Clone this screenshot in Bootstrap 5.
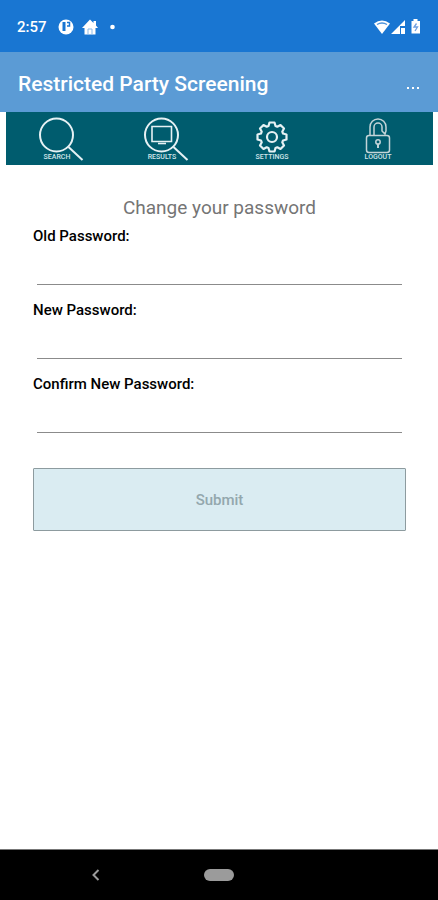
<!DOCTYPE html>
<html lang="en">
<head>
<meta charset="utf-8">
<meta name="viewport" content="width=device-width, initial-scale=1">
<title>Restricted Party Screening</title>
<link href="https://cdn.jsdelivr.net/npm/bootstrap@5.3.0/dist/css/bootstrap.min.css" rel="stylesheet">
<style>
  body { font-family: Roboto, "Noto Sans", sans-serif; background: #fff; }
  .status-bar { background: #1976d2; height: 52px; padding: 2px 16px 0 17px; font-size: 15px; font-weight: 500; }
  .app-bar { background: #5b9bd5; height: 60px; padding: 3px 18px 0; }
  .app-title { font-size: 21px; line-height: 28px; font-weight: 500; }
  .tabs-bar { background: #005c6e; margin: 0 5px 0 6px; padding: 2px 3px 3px 2px; }
  .tabs-bar svg text { font: 500 7px Roboto, sans-serif; fill: #d3e6ea; stroke: none; text-anchor: middle; }
  .form-area { padding: 29px 32px 0 33px; }
  .form-heading { font-size: 19px; line-height: 28px; font-weight: 400; color: #757575; }
  .field-label { font-size: 15px; line-height: 20px; font-weight: 500; color: #000; margin: 4px 0; }
  .line-input { border: 0; border-bottom: 1px solid #8b8b8b; border-radius: 0; height: 35px; padding: 4px 0; background: transparent; }
  .field-block { padding-bottom: 11px; }
  .line-wrap { padding: 0 4px; }
  .submit-btn { height: 63px; margin-top: 24px; padding-top: 8px; font-size: 15px; font-weight: 500; border-radius: 1px; }
  .submit-btn:disabled { background: #daecf2; color: #93a7ad; border-color: #8d9b9f; opacity: 1; }
  .system-nav { background: #000; height: 51px; border-top: 1px solid #777; }
  .home-pill { width: 30px; height: 12px; background: #9b9b9b; }
</style>
<script src="https://cdn.jsdelivr.net/npm/bootstrap@5.3.0/dist/js/bootstrap.bundle.min.js"></script>
</head>
<body class="d-flex flex-column min-vh-100">
  <div class="status-bar d-flex align-items-center justify-content-between text-white">
    <div class="d-flex align-items-center">
      <span>2:57</span>
      <svg class="ms-2" width="62" height="18" viewBox="0 0 62 18" fill="#fff" aria-hidden="true">
        <circle cx="11" cy="9" r="7.500"/>
        <path d="M9 4v9" stroke="#1976d2" stroke-width="3"/>
        <path d="M12 4.500h2.500v3.500H12" fill="none" stroke="#1976d2" stroke-width="1.500"/>
        <path d="M27 10 35 1.500l3.500 3.500V3h2.500v4.500l2 2.500h-2.500v6.500h-11V10z"/>
        <path d="M33 16v-5h4v5" fill="none" stroke="#8dbbe8"/>
        <circle cx="57.500" cy="9" r="2.300"/>
      </svg>
    </div>
    <svg width="50" height="18" viewBox="0 0 50 18" fill="#fff" aria-hidden="true">
      <path d="M2 5.500Q10-.500 18 5.500L10 16z"/>
      <path d="M5 6.500Q10 3.500 15 6.500" fill="none" stroke="#4b91db" stroke-width="1.300"/>
      <path d="M19 16 33 2v6h-5v8z"/>
      <path d="M29 10h4v6h-4z"/>
      <path d="M41.500 3V1h4v2H48v12.500h-8.500V3z"/>
      <path d="M44.500 5.500 42 9h3.500L43 13" fill="none" stroke="#6f9fe0" stroke-width="1.300"/>
    </svg>
  </div>

  <header class="app-bar d-flex align-items-center justify-content-between text-white">
    <h1 class="app-title mb-0">Restricted Party Screening</h1>
    <button type="button" class="btn p-0 border-0 d-flex" aria-label="More options">
      <svg width="14" height="20" viewBox="0 0 14 20" fill="#fff" aria-hidden="true"><path d="M1 13h2v2H1zM6 13h2v2H6zM11 13h2v2h-2z"/></svg>
    </button>
  </header>

  <nav class="tabs-bar row g-0" aria-label="Main">
    <a class="col d-flex justify-content-center" href="#search">
      <svg width="48" height="48" viewBox="0 0 48 48" fill="none" stroke="#e6f1f4" stroke-width="2">
        <circle cx="19.500" cy="21" r="16.500"/><path d="M31.500 33 45.500 46"/><text x="20" y="45">SEARCH</text>
      </svg>
    </a>
    <a class="col d-flex justify-content-center" href="#results">
      <svg width="48" height="48" viewBox="0 0 48 48" fill="none" stroke="#e6f1f4" stroke-width="2">
        <circle cx="19.500" cy="21" r="16.500"/><path d="M31.500 33 45.500 46"/>
        <path d="M10 12.500h19.500v15H10z" stroke-width="1.600"/><path d="M16 29.500h8" stroke-width="1.600"/><text x="20" y="45">RESULTS</text>
      </svg>
    </a>
    <a class="col d-flex justify-content-center" href="#settings">
      <svg width="48" height="48" viewBox="0 0 48 48" fill="none" stroke="#e6f1f4" stroke-width="2.200" stroke-linejoin="round">
        <path transform="translate(24 23)" d="M-3.500-11-2.500-14.500h5L3.500-11 5.300-10.250 8.500-12 12-8.500 10.250-5.300 11-3.500 14.500-2.500v5L11 3.500 10.250 5.300 12 8.500 8.500 12 5.300 10.250 3.500 11 2.500 14.500h-5L-3.500 11-5.300 10.250-8.500 12-12 8.500-10.250 5.300-11 3.500-14.500 2.500v-5L-11-3.500-10.250-5.300-12-8.500-8.500-12-5.300-10.250z"/>
        <circle cx="24" cy="23" r="5"/>
        <text x="24" y="45">SETTINGS</text>
      </svg>
    </a>
    <a class="col d-flex justify-content-center" href="#logout">
      <svg width="48" height="48" viewBox="0 0 48 48" fill="none" stroke="#c3d4d8" stroke-width="1.500">
        <rect x="13.500" y="21.500" width="23" height="17" rx="2.500"/>
        <path d="M17 21v-8a8 8 0 0 1 16 0v4l-1 3-3-3v-4a4 4 0 0 0-8 0v8"/>
        <circle cx="25" cy="28" r="2.200"/><path d="M25 29.500v4.500" stroke-width="2"/>
        <text x="25" y="45">LOGOUT</text>
      </svg>
    </a>
  </nav>

  <main class="flex-grow-1">
    <form class="form-area">
      <h2 class="form-heading text-center mb-0">Change your password</h2>
      <div class="field-block">
        <label class="field-label d-block" for="oldPassword">Old Password:</label>
        <div class="line-wrap"><input class="form-control line-input" type="password" id="oldPassword"></div>
      </div>
      <div class="field-block">
        <label class="field-label d-block" for="newPassword">New Password:</label>
        <div class="line-wrap"><input class="form-control line-input" type="password" id="newPassword"></div>
      </div>
      <div class="field-block">
        <label class="field-label d-block" for="confirmPassword">Confirm New Password:</label>
        <div class="line-wrap"><input class="form-control line-input" type="password" id="confirmPassword"></div>
      </div>
      <button class="btn submit-btn w-100" type="submit" disabled>Submit</button>
    </form>
  </main>

  <footer class="system-nav row g-0 align-items-center">
    <div class="col d-flex justify-content-center">
      <button type="button" class="btn p-0 border-0 d-flex" aria-label="Back">
        <svg width="24" height="16" viewBox="0 0 24 16" fill="none" stroke="#9b9b9b" stroke-width="2" aria-hidden="true"><path d="M8.500 3 3.500 8l5 5"/></svg>
      </button>
    </div>
    <div class="col-auto"><button type="button" class="btn home-pill rounded-pill p-0 border-0 d-block" aria-label="Home"></button></div>
    <div class="col"></div>
  </footer>
</body>
</html>
